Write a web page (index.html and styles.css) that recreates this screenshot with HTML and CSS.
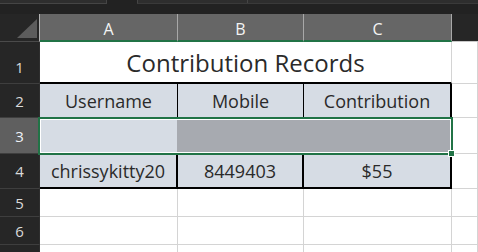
FILE: index.html
```html
<!DOCTYPE html>
<html lang="en">
<head>
  <meta charset="UTF-8">
  <title>Contribution Records</title>
  <link rel="stylesheet" href="styles.css">
</head>
<body>

  <div class="topbar">
    <div class="namebox"></div>
    <div class="formulabar">
      <div class="fx-part"></div>
    </div>
  </div>

  <div class="sheet">
    <!-- column headers -->
    <div class="corner"><span class="tri"></span></div>
    <div class="ch sel">A</div>
    <div class="ch sel">B</div>
    <div class="ch sel">C</div>
    <div class="ch blank"></div>

    <!-- row 1 -->
    <div class="rh first">1</div>
    <div class="cell title">Contribution Records</div>
    <div class="cell"></div>

    <!-- row 2 -->
    <div class="rh">2</div>
    <div class="cell tbl r2 thin">Username</div>
    <div class="cell tbl r2 thin">Mobile</div>
    <div class="cell tbl r2 edge">Contribution</div>
    <div class="cell"></div>

    <!-- row 3 -->
    <div class="rh active">3</div>
    <div class="cell tbl r3 a3"></div>
    <div class="cell tbl r3 hi"></div>
    <div class="cell tbl r3 hi"></div>
    <div class="cell"></div>

    <!-- row 4 -->
    <div class="rh">4</div>
    <div class="cell tbl r4">chrissykitty20</div>
    <div class="cell tbl r4">8449403</div>
    <div class="cell tbl r4">$55</div>
    <div class="cell"></div>

    <!-- rows 5-7 -->
    <div class="rh">5</div>
    <div class="cell"></div>
    <div class="cell"></div>
    <div class="cell"></div>
    <div class="cell"></div>

    <div class="rh">6</div>
    <div class="cell"></div>
    <div class="cell"></div>
    <div class="cell"></div>
    <div class="cell"></div>

    <!-- row 7 only peeks in at the bottom edge -->
    <div class="rh"></div>
    <div class="cell"></div>
    <div class="cell"></div>
    <div class="cell"></div>
    <div class="cell"></div>

    <!-- selection of A3:C3 -->
    <div class="selection"></div>
    <div class="handle"></div>
  </div>

</body>
</html>
```

FILE: styles.css
```css
body {
  margin: 0;
  width: 478px;
  height: 252px;
  overflow: hidden;
  background: #ffffff;
  font-family: "Open Sans", "Noto Sans", sans-serif;
}
.topbar {
  height: 14px;
  background: #222222;
  display: flex;
  align-items: flex-start;
}
.namebox {
  width: 106px;
  height: 3px;
  background: #2e2e2e;
  border-right: 1px solid #454545;
  border-bottom: 1px solid #454545;
}
.formulabar {
  flex: 1;
  height: 3px;
  margin-left: 30px;
  background: #2e2e2e;
  border-left: 1px solid #454545;
  border-bottom: 1px solid #3a3a3a;
}
.fx-part {
  width: 109px;
  height: 3px;
  border-right: 1px solid #454545;
}
.sheet {
  position: relative;
  display: grid;
  grid-template-columns: 40px 138px 126px 148px 26px;
  grid-template-rows: 28px 42px 34px 36px 35px 28px 28px 8px;
}
.sheet > div {
  box-sizing: border-box;
}
.corner {
  background: #262626;
  border-right: 1px solid #b4b4b4;
  border-bottom: 1px solid #4a4a4a;
  display: flex;
  justify-content: flex-end;
  align-items: flex-end;
  padding: 0 2px 3px 0;
}
.tri {
  width: 20px;
  height: 19px;
  background: #5c5c5c;
  clip-path: polygon(100% 0, 100% 100%, 0 100%);
}
.ch {
  background: #666666;
  color: #f4f4f4;
  font-size: 16px;
  display: flex;
  align-items: center;
  justify-content: center;
  padding-top: 3px;
  border-right: 1px solid #a8a8a8;
}
.ch.sel {
  border-bottom: 2px solid #217346;
}
.ch.blank {
  background: #262626;
  border-right: none;
  border-bottom: 1px solid #c8c8c8;
}
.rh {
  background: #262626;
  color: #dadada;
  font-size: 15px;
  display: flex;
  align-items: center;
  justify-content: center;
  border-right: 1px solid #2e2e2e;
  border-bottom: 1px solid #3e3e3e;
}
.rh.first {
  padding-top: 8px;
}
.rh.active {
  background: #5f5f5f;
  color: #eef2f8;
}
.cell {
  border-right: 1px solid #d4d4d4;
  border-bottom: 1px solid #d4d4d4;
  color: #2a2a2a;
  font-size: 18px;
  display: flex;
  align-items: center;
  justify-content: center;
  white-space: nowrap;
}
.title {
  grid-column: span 3;
  font-size: 24px;
  border-bottom: 2px solid #000000;
}
.tbl {
  background: #d6dce4;
}
.r2.thin {
  border-right: 1px solid #000000;
}
.r2.edge {
  border-right: 2px solid #000000;
}
.r3 {
  border-right-color: #a7aab0;
}
.r3.hi {
  background: #a7aab0;
}
.r4 {
  border-right: 2px solid #000000;
  border-bottom: 2px solid #000000;
}
.selection {
  position: absolute;
  left: 38px;
  top: 103px;
  width: 415px;
  height: 38px;
  border: 2px solid #217346;
  box-shadow: inset 0 0 0 1px #ffffff;
}
.handle {
  position: absolute;
  left: 448px;
  top: 136px;
  width: 7px;
  height: 7px;
  background: #217346;
  border: 1px solid #ffffff;
}
```
